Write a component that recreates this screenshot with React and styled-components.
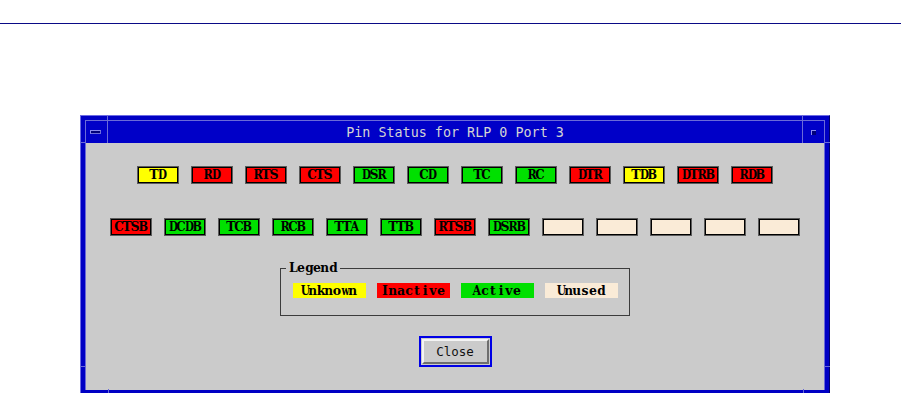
import React from "react";
import styled, { createGlobalStyle } from "styled-components";

const Global = createGlobalStyle`
  html, body { margin: 0; padding: 0; background: #ffffff; }
  body { font-family: "DejaVu Sans Mono", monospace; overflow: hidden; }
`;

const COLORS = {
  unknown: "#ffff00",
  inactive: "#ff0000",
  active: "#00e000",
  unused: "#faebd7",
};

/* approximate advance widths (em) of DejaVu Serif Bold, used to squeeze
   glyphs into fixed typewriter cells */
const ADV = {
  A: 0.776, B: 0.762, C: 0.734, D: 0.83, E: 0.73, I: 0.445, L: 0.701,
  N: 0.878, O: 0.82, P: 0.733, R: 0.77, S: 0.683, T: 0.682, U: 0.812,
  a: 0.648, c: 0.593, d: 0.708, e: 0.65, g: 0.708, i: 0.38, k: 0.686,
  n: 0.712, o: 0.668, s: 0.59, t: 0.478, u: 0.712, v: 0.652, w: 0.924,
};
const FS = 12.5;
const CELL = 8;

const TopBar = styled.div`
  height: 23px;
  border-bottom: 1px solid #0a0a86;
`;

const Window = styled.div`
  position: relative;
  box-sizing: border-box;
  margin: 91px 0 0 80px;
  width: 750px;
  height: 280px;
  background: #0000c4;
  border: 1px solid;
  border-color: #6c6ce4 #00006c #00006c #6c6ce4;
  padding: 4px;
  display: flex;
`;

const Tick = styled.span`
  position: absolute;
  background: #6a6ad8;
  ${(p) => (p.$v ? "width: 1px; height: 5px;" : "width: 5px; height: 1px;")}
`;

const Inner = styled.div`
  flex: 1;
  display: flex;
  flex-direction: column;
  border: 1px solid #6a6ad8;
  border-bottom: none;
`;

const TitleRow = styled.div`
  height: 22px;
  display: flex;
  background: #0000c8;
`;

const CornerButton = styled.div`
  width: 22px;
  box-sizing: border-box;
  display: flex;
  align-items: center;
  justify-content: ${(p) => (p.$right ? "center" : "flex-start")};
  padding-left: ${(p) => (p.$right ? "0" : "4px")};
  border-right: ${(p) => (p.$right ? "none" : "1px solid #6a6ad8")};
  border-left: ${(p) => (p.$right ? "1px solid #6a6ad8" : "none")};
`;

const MinIcon = styled.div`
  width: 11px;
  height: 4px;
  box-sizing: border-box;
  background: #00007a;
  border: 1px solid;
  border-color: #8a8aee #6a6ad8 #6a6ad8 #8a8aee;
`;

const MaxIcon = styled.div`
  width: 5px;
  height: 5px;
  box-sizing: border-box;
  background: #00007a;
  border-top: 1px solid #8a8aee;
  border-left: 1px solid #8a8aee;
`;

const Title = styled.div`
  flex: 1;
  display: flex;
  align-items: center;
  justify-content: center;
  color: #d4d4d4;
  font-family: "DejaVu Sans Mono", monospace;
  font-size: 13.4px;
  padding-top: 1px;
`;

const Content = styled.div`
  flex: 1;
  background: #cbcbcb;
  display: flex;
  flex-direction: column;
  align-items: center;
  padding-top: 23px;
`;

const PinRow = styled.div`
  display: flex;
  gap: 12px;
  margin-bottom: ${(p) => p.$mb}px;
`;

const TypeText = styled.span`
  display: inline-flex;
  font-family: "DejaVu Serif", "Liberation Serif", serif;
  font-weight: bold;
  font-size: ${FS}px;
  color: #000;
  line-height: 1;
`;

const Cell = styled.span`
  display: inline-flex;
  justify-content: center;
  width: ${CELL}px;
`;

const Glyph = styled.span`
  display: inline-block;
  white-space: pre;
  transform: scaleX(${(p) => p.$k});
`;

function Typewriter({ text }) {
  return (
    <TypeText>
      {text.split("").map((ch, i) => {
        const w = (ADV[ch] || 0.65) * FS;
        const k = Math.min(1, (CELL + 0.6) / w).toFixed(2);
        return (
          <Cell key={i}>
            <Glyph $k={k}>{ch}</Glyph>
          </Cell>
        );
      })}
    </TypeText>
  );
}

const Pin = styled.div`
  box-sizing: border-box;
  width: 42px;
  height: 18px;
  background: ${(p) => COLORS[p.$state]};
  border: 1px solid #5c5c5c;
  box-shadow: inset 0 0 0 1px #000;
  display: flex;
  align-items: center;
  justify-content: center;
  padding-top: 1px;
`;

const GroupBox = styled.div`
  position: relative;
  box-sizing: border-box;
  width: 350px;
  height: 48px;
  border: 1px solid #3c3c3c;
  display: flex;
  justify-content: center;
  align-items: flex-start;
  gap: 11px;
  padding-top: 14px;
`;

const GroupLabel = styled.span`
  position: absolute;
  top: -8px;
  left: 5px;
  padding: 1px 3px 2px;
  background: #cbcbcb;
  display: flex;
`;

const LegendItem = styled.div`
  width: 73px;
  height: 15px;
  background: ${(p) => COLORS[p.$state]};
  display: flex;
  align-items: center;
  justify-content: center;
  padding-top: 1px;
  box-sizing: border-box;
`;

const CloseFrame = styled.div`
  margin-top: 20px;
  border: 2px solid #0000e6;
  padding: 1px;
  background: #cbcbcb;
`;

const CloseButton = styled.button`
  box-sizing: border-box;
  width: 67px;
  height: 25px;
  margin: 0;
  padding: 0;
  display: block;
  background: #cbcbcb;
  border: 2px solid;
  border-color: #f4f4f4 #6e6e6e #6e6e6e #f4f4f4;
  font-family: "DejaVu Sans Mono", monospace;
  font-size: 12.5px;
  color: #111;
`;

const row1 = [
  ["TD", "unknown"], ["RD", "inactive"], ["RTS", "inactive"], ["CTS", "inactive"],
  ["DSR", "active"], ["CD", "active"], ["TC", "active"], ["RC", "active"],
  ["DTR", "inactive"], ["TDB", "unknown"], ["DTRB", "inactive"], ["RDB", "inactive"],
];
const row2 = [
  ["CTSB", "inactive"], ["DCDB", "active"], ["TCB", "active"], ["RCB", "active"],
  ["TTA", "active"], ["TTB", "active"], ["RTSB", "inactive"], ["DSRB", "active"],
  ["", "unused"], ["", "unused"], ["", "unused"], ["", "unused"], ["", "unused"],
];
const legend = [
  ["Unknown", "unknown"], ["Inactive", "inactive"], ["Active", "active"], ["Unused", "unused"],
];

const ticks = [
  { v: true, style: { left: 26, top: -1 } },
  { v: false, style: { left: -1, top: 26 } },
  { v: true, style: { left: 721, top: -1 } },
  { v: false, style: { left: 744, top: 26 } },
  { v: true, style: { left: 27, top: 273 } },
  { v: true, style: { left: 722, top: 273 } },
  { v: false, style: { left: -1, top: 250 } },
  { v: false, style: { left: 744, top: 250 } },
];

export default function App() {
  return (
    <>
      <Global />
      <TopBar />
      <Window>
        {ticks.map((t, i) => (
          <Tick key={i} $v={t.v} style={t.style} />
        ))}
        <Inner>
          <TitleRow>
            <CornerButton>
              <MinIcon />
            </CornerButton>
            <Title>Pin Status for RLP 0 Port 3</Title>
            <CornerButton $right>
              <MaxIcon />
            </CornerButton>
          </TitleRow>
          <Content>
            <PinRow $mb={34}>
              {row1.map(([l, s], i) => (
                <Pin key={i} $state={s}><Typewriter text={l} /></Pin>
              ))}
            </PinRow>
            <PinRow $mb={32}>
              {row2.map(([l, s], i) => (
                <Pin key={i} $state={s}><Typewriter text={l} /></Pin>
              ))}
            </PinRow>
            <GroupBox>
              <GroupLabel><Typewriter text="Legend" /></GroupLabel>
              {legend.map(([l, s]) => (
                <LegendItem key={l} $state={s}><Typewriter text={l} /></LegendItem>
              ))}
            </GroupBox>
            <CloseFrame>
              <CloseButton>Close</CloseButton>
            </CloseFrame>
          </Content>
        </Inner>
      </Window>
    </>
  );
}
